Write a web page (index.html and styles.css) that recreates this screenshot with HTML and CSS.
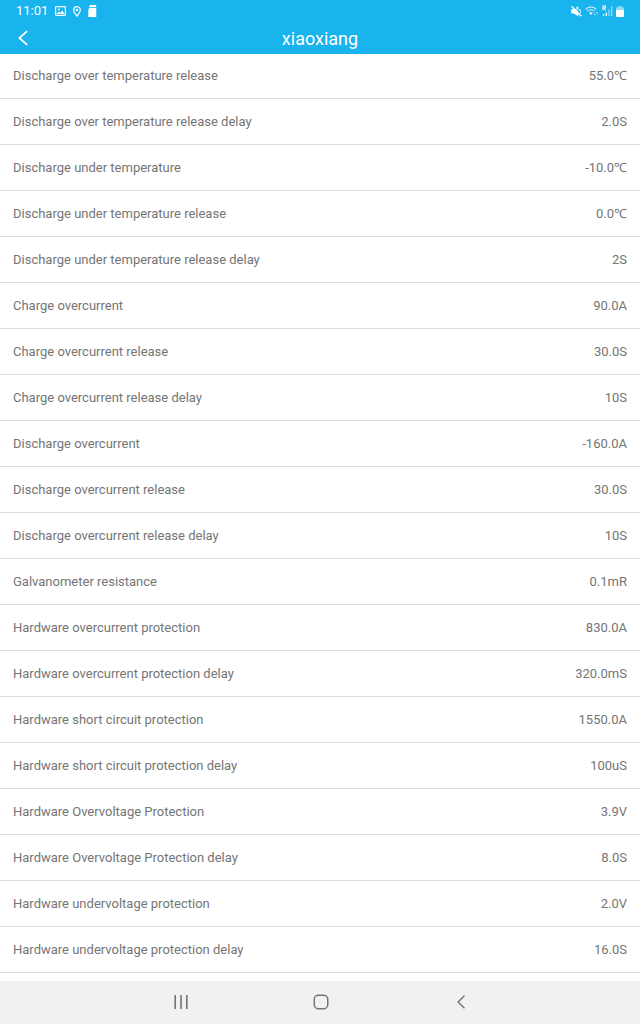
FILE: index.html
```html
<!DOCTYPE html>
<html lang="en">
<head>
<meta charset="utf-8">
<meta name="viewport" content="width=device-width, initial-scale=1">
<title>xiaoxiang</title>
<link rel="stylesheet" href="styles.css">
</head>
<body>
<div class="screen">
  <header class="top">
    <div class="status">
      <div class="status-group">
        <span class="clock">11:01</span>
        <svg width="11" height="10" viewBox="0 0 11 10" fill="none" stroke="currentColor"><rect x=".6" y=".6" width="9.800" height="8.800" rx=".8" stroke-width="1.200"/><path d="M1.500 8l2.200-2.600L5.300 7l2-2.600L9.500 8z" fill="currentColor" stroke="none"/><circle cx="4" cy="3.400" r=".9" fill="currentColor" stroke="none"/></svg>
        <svg width="8" height="11" viewBox="0 0 8 11" fill="none" stroke="currentColor"><path d="M4 10.200C2 7.600.7 5.700.7 4a3.300 3.300 0 0 1 6.600 0C7.300 5.700 6 7.600 4 10.200z" stroke-width="1.200"/><circle cx="4" cy="4" r="1.200" fill="currentColor" stroke="none"/></svg>
        <svg width="9" height="12" viewBox="0 0 9 12" fill="currentColor"><path d="M2.500 0h5.700v2.200H1.200V1z"/><path d="M1.200 2.900h7V5H.500v-.8zM.3 5h8v7h-8z"/></svg>
      </div>
      <div class="status-group status-right">
        <svg width="11" height="11" viewBox="0 0 11 11" fill="currentColor"><path d="M.2 3.200h2.600L7.200.300v10L2.800 7.500H.2z"/><path d="M8.300 2.800c1.500 1.300 1.500 4 0 5.400" fill="none" stroke="currentColor"/><path d="M2-.3l9.500 10" stroke="#19b3ee" stroke-width="1"/><path d="M.6.300l9.800 10" stroke="currentColor" stroke-width="1.300"/></svg>
        <svg width="14" height="12" viewBox="0 0 15 12" fill="none" stroke="currentColor"><path d="M.7 4.200c3.200-3.300 8.100-3.300 11.300 0M2.600 6.200c2.100-2.200 5.400-2.200 7.500 0" stroke-width="1.100" opacity=".85"/><path d="M4.400 8c1.100-1 2.800-1 3.900 0l-2 2.300z" fill="currentColor" stroke="none"/><path d="M10.500 7v3.500m-1-1l1 1 1-1M13 10.500V7m-1 1l1-1 1 1" stroke-width=".6" opacity=".7"/></svg>
        <svg width="11" height="12" viewBox="0 0 11 12" fill="none" stroke="currentColor"><path d="M1 5.200V.7h1.500c1.600 0 1.600 2.300 0 2.300H1m1.300 0l1.400 2.200" stroke-width="1.100"/><path d="M1.500 11V9M4.300 11V7.500" stroke-width="1.300"/><path d="M7 11V4.500M9.700 11V1" stroke-width="1.200" opacity=".6"/></svg>
        <svg width="8" height="11" viewBox="0 0 8 11" fill="currentColor"><path d="M2.300 0h3.400v1.200H7q1 0 1 1V4H0V2.200q0-1 1-1h1.300z" opacity=".5"/><path d="M0 4h8v6q0 1-1 1H1q-1 0-1-1z"/></svg>
      </div>
    </div>
    <div class="titlebar">
      <button class="back" type="button" aria-label="Back"><svg width="10" height="16" viewBox="0 0 10 16" fill="none" stroke="currentColor" stroke-width="1.700"><path d="M9.200 1.200L1.300 8l7.900 6.800"/></svg></button>
      <h1 class="title">xiaoxiang</h1>
    </div>
  </header>
  <main class="content">
    <dl class="list">
      <div class="row"><dt>Discharge over temperature release</dt><dd>55.0℃</dd></div>
      <div class="row"><dt>Discharge over temperature release delay</dt><dd>2.0S</dd></div>
      <div class="row"><dt>Discharge under temperature</dt><dd>-10.0℃</dd></div>
      <div class="row"><dt>Discharge under temperature release</dt><dd>0.0℃</dd></div>
      <div class="row"><dt>Discharge under temperature release delay</dt><dd>2S</dd></div>
      <div class="row"><dt>Charge overcurrent</dt><dd>90.0A</dd></div>
      <div class="row"><dt>Charge overcurrent release</dt><dd>30.0S</dd></div>
      <div class="row"><dt>Charge overcurrent release delay</dt><dd>10S</dd></div>
      <div class="row"><dt>Discharge overcurrent</dt><dd>-160.0A</dd></div>
      <div class="row"><dt>Discharge overcurrent release</dt><dd>30.0S</dd></div>
      <div class="row"><dt>Discharge overcurrent release delay</dt><dd>10S</dd></div>
      <div class="row"><dt>Galvanometer resistance</dt><dd>0.1mR</dd></div>
      <div class="row"><dt>Hardware overcurrent protection</dt><dd>830.0A</dd></div>
      <div class="row"><dt>Hardware overcurrent protection delay</dt><dd>320.0mS</dd></div>
      <div class="row"><dt>Hardware short circuit protection</dt><dd>1550.0A</dd></div>
      <div class="row"><dt>Hardware short circuit protection delay</dt><dd>100uS</dd></div>
      <div class="row"><dt>Hardware Overvoltage Protection</dt><dd>3.9V</dd></div>
      <div class="row"><dt>Hardware Overvoltage Protection delay</dt><dd>8.0S</dd></div>
      <div class="row"><dt>Hardware undervoltage protection</dt><dd>2.0V</dd></div>
      <div class="row"><dt>Hardware undervoltage protection delay</dt><dd>16.0S</dd></div>
    </dl>
  </main>
  <nav class="navbar" aria-label="System navigation">
    <button class="nav-button" type="button" aria-label="Recent apps"><svg width="14" height="14" viewBox="0 0 14 14" stroke="currentColor" stroke-width="1.600"><path d="M1.200 0v14M7 0v14M12.800 0v14"/></svg></button>
    <button class="nav-button" type="button" aria-label="Home"><svg width="16" height="16" viewBox="0 0 16 16" fill="none" stroke="currentColor" stroke-width="1.500"><rect x="1.250" y="1.250" width="13.500" height="13.500" rx="4"/></svg></button>
    <button class="nav-button" type="button" aria-label="Back"><svg width="8" height="14" viewBox="0 0 8 14" fill="none" stroke="currentColor" stroke-width="1.500"><path d="M7.500.7L1 7l6.500 6.300"/></svg></button>
  </nav>
</div>
</body>
</html>
```
FILE: styles.css
```css
* {
  box-sizing: border-box;
}

body {
  margin: 0;
  background: #fff;
  color: #757575;
  font-family: Roboto, "Noto Sans", "Noto Sans CJK SC", sans-serif;
  font-size: 13px;
  line-height: 16px;
}

button {
  display: flex;
  align-items: center;
  justify-content: center;
  padding: 0;
  border: 0;
  background: none;
  color: inherit;
}

svg {
  display: block;
  flex: none;
}

.screen {
  display: flex;
  flex-direction: column;
  min-height: 100vh;
}

.top {
  background: #19b3ee;
  color: #fff;
}

.status {
  display: flex;
  align-items: center;
  justify-content: space-between;
  height: 22px;
  padding: 0 16px;
}

.status-group {
  display: flex;
  align-items: center;
  gap: 7px;
}

.status-right {
  gap: 3px;
}

.clock {
  font-size: 13px;
}

.titlebar {
  display: grid;
  grid-template-columns: 46px 1fr 46px;
  align-items: center;
  height: 32px;
}

.back {
  height: 32px;
}

.title {
  margin: 0;
  padding-top: 2px;
  font-size: 18px;
  font-weight: 400;
  line-height: 24px;
  text-align: center;
}

.content {
  flex: 1;
}

.list {
  margin: 0;
}

.row {
  display: flex;
  align-items: center;
  justify-content: space-between;
  gap: 16px;
  padding: 15px 13px 14px;
  border-bottom: 1px solid #dedede;
}

.row:first-child {
  padding-top: 14px;
}

.row dd {
  margin: 0;
}

.navbar {
  display: flex;
  justify-content: center;
  height: 43px;
  padding: 0 0 2px 2px;
  background: #f1f1f1;
}

.nav-button {
  width: 22%;
}
```
